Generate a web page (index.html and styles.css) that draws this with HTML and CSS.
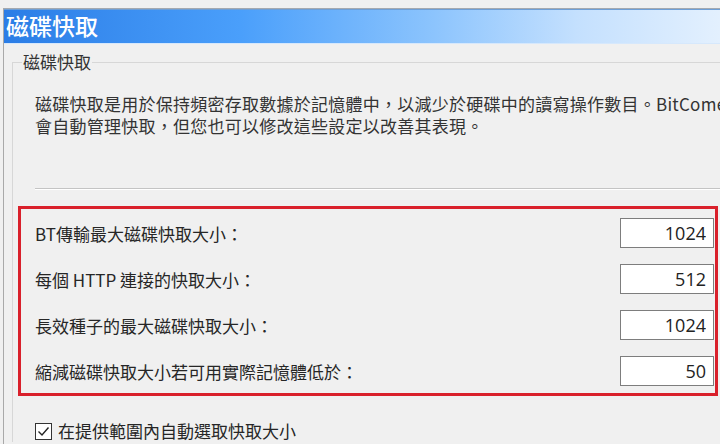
FILE: index.html
```html
<!DOCTYPE html>
<html lang="zh-Hant">
<head>
<meta charset="utf-8">
<title>磁碟快取</title>
<link rel="stylesheet" href="styles.css">
</head>
<body>
<div class="window">
  <div class="titlebar">磁碟快取</div>
  <div class="content">
    <fieldset class="group">
      <legend class="group-title">磁碟快取</legend>
      <p class="desc">磁碟快取是用於保持頻密存取數據於記憶體中，以減少於硬碟中的讀寫操作數目。BitComet<br>會自動管理快取，但您也可以修改這些設定以改善其表現。</p>
      <div class="sep"></div>
      <div class="redbox">
        <div class="row"><span class="label">BT傳輸最大磁碟快取大小：</span><input class="num" type="text" value="1024"></div>
        <div class="row"><span class="label">每個 HTTP 連接的快取大小：</span><input class="num" type="text" value="512"></div>
        <div class="row"><span class="label">長效種子的最大磁碟快取大小：</span><input class="num" type="text" value="1024"></div>
        <div class="row"><span class="label">縮減磁碟快取大小若可用實際記憶體低於：</span><input class="num" type="text" value="50"></div>
      </div>
      <div class="check-row">
        <span class="checkbox"><svg width="15" height="15" viewBox="0 0 15 15"><path d="M2.5 7.5 L6 11 L12.5 3.5" fill="none" stroke="#222" stroke-width="1.4"/></svg></span>
        <span class="check-label">在提供範圍內自動選取快取大小</span>
      </div>
    </fieldset>
  </div>
</div>
</body>
</html>
```
FILE: styles.css
```css
html, body {
  margin: 0;
  padding: 0;
  background: #f0f0f0;
  overflow: hidden;
}
body {
  font-family: "Noto Sans CJK TC", "Noto Sans", sans-serif;
  color: #262626;
  width: 720px;
  height: 444px;
}
.window {
  margin: 8px 0 0 3px;
  border-top: 1px solid #a4a9b0;
  border-left: 1px solid #a9a9a9;
  height: 435px;
}
.titlebar {
  height: 34px;
  line-height: 33px;
  padding-left: 2px;
  font-size: 23px;
  font-weight: 500;
  color: #ffffff;
  background: linear-gradient(to right, #2b7de6 0%, #4a9ffb 33%, #8cc4fd 60%, #c4e0fe 80%, #e3f0fe 100%);
  border-bottom: 1px solid #d6e8fc;
  box-shadow: inset 0 1px 0 #6f9fd6;
  white-space: nowrap;
}
.content {
  padding-left: 8px;
}
.group {
  margin: 8px 0 0 0;
  border: 1px solid #d7d7d7;
  border-right: 0;
  border-bottom: 0;
  padding: 21px 0 0 5px;
  min-width: 0;
}
.group-title {
  margin-left: 4px;
  padding: 0 1px;
  font-size: 17px;
  line-height: 20px;
  color: #333;
}
.desc {
  margin: 0 0 0 17px;
  font-size: 17px;
  line-height: 22px;
  letter-spacing: 0.25px;
  color: #333;
  white-space: nowrap;
  overflow: hidden;
}
.sep {
  margin: 51px 0 0 17px;
  height: 1px;
  background: #c4c4c4;
  border-bottom: 1px solid #ffffff;
}
.redbox {
  box-sizing: border-box;
  margin-top: 16px;
  width: 700px;
  border: 3px solid #d9202b;
  padding: 9px 1px 7px 14px;
  display: flex;
  flex-direction: column;
  gap: 16px;
}
.row {
  display: flex;
  align-items: center;
  justify-content: space-between;
  height: 30px;
}
.label {
  font-size: 17px;
  line-height: 22px;
  color: #262626;
  padding-top: 2px;
}
.num {
  box-sizing: border-box;
  width: 94px;
  height: 30px;
  margin: 0;
  border: 1px solid #7d7d7d;
  background: #ffffff;
  text-align: right;
  padding: 0 7px 0 0;
  font-family: "Open Sans", "Noto Sans", sans-serif;
  font-size: 18px;
  color: #222;
  outline: none;
}
.check-row {
  margin: 24px 0 0 17px;
  display: flex;
  align-items: center;
}
.checkbox {
  box-sizing: border-box;
  width: 17px;
  height: 17px;
  border: 1px solid #333;
  background: #fff;
  display: flex;
  align-items: center;
  justify-content: center;
}
.check-label {
  margin-left: 6px;
  font-size: 17px;
  line-height: 22px;
  color: #262626;
}
```
